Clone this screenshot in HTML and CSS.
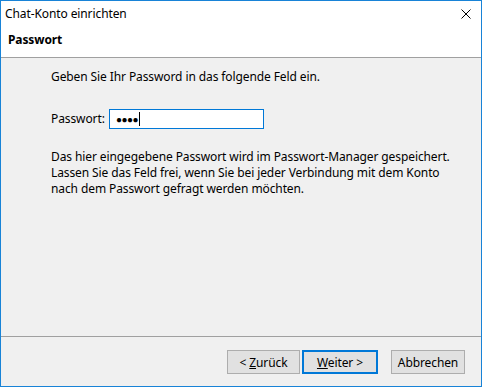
FILE: index.html
```html
<!DOCTYPE html>
<html lang="de">
<head>
    <meta charset="UTF-8">
    <title>Chat-Konto einrichten</title>
    <link rel="stylesheet" href="styles.css">
</head>
<body>
    <div class="window">
        <div class="titlebar">
            <span class="title">Chat-Konto einrichten</span>
            <svg class="close" width="10" height="10" viewBox="0 0 10 10">
                <path d="M0.5 0.5 L9.5 9.5 M9.5 0.5 L0.5 9.5" stroke="#000" stroke-width="1" fill="none"/>
            </svg>
        </div>
        <div class="header">Passwort</div>
        <div class="content">
            <p class="intro">Geben Sie Ihr Password in das folgende Feld ein.</p>
            <div class="field-row">
                <label for="pw">Passwort:</label>
                <div class="input-box" id="pw"><span class="dots">&#9679;&#9679;&#9679;&#9679;</span><span class="caret"></span></div>
            </div>
            <p class="note">Das hier eingegebene Passwort wird im Passwort-Manager gespeichert.<br>
            Lassen Sie das Feld frei, wenn Sie bei jeder Verbindung mit dem Konto<br>
            nach dem Passwort gefragt werden möchten.</p>
        </div>
        <div class="footer">
            <button class="btn btn-back">&lt; <u>Z</u>urück</button>
            <button class="btn btn-next"><u>W</u>eiter &gt;</button>
            <button class="btn btn-cancel">Abbrechen</button>
        </div>
    </div>
</body>
</html>
```

FILE: styles.css
```css
html, body {
    margin: 0;
    padding: 0;
}
body {
    font-family: "Noto Sans", "Open Sans", sans-serif;
    font-size: 12px;
    letter-spacing: -0.1px;
    color: #000;
}
.window {
    width: 482px;
    height: 387px;
    box-sizing: border-box;
    border: 1px solid #1883d7;
    background-color: #f0f0f0;
    display: flex;
    flex-direction: column;
}
.titlebar {
    height: 26px;
    background-color: #fff;
    display: flex;
    align-items: center;
    justify-content: space-between;
    padding: 0 10px 0 4px;
}
.title {
    font-size: 12px;
    line-height: 16px;
}
.header {
    background-color: #fff;
    font-weight: bold;
    line-height: 16px;
    padding: 5px 7px 9px;
    border-bottom: 1px solid #a0a0a0;
}
.content {
    flex: 1;
    padding: 11px 20px 0 50px;
    line-height: 16px;
}
.intro {
    margin: 0;
}
.field-row {
    display: flex;
    align-items: center;
    margin-top: 24px;
}
.field-row label {
    width: 58px;
}
.input-box {
    width: 147px;
    height: 18px;
    border: 1px solid #0078d7;
    background-color: #fff;
    display: flex;
    align-items: center;
    padding-left: 6px;
    box-sizing: content-box;
}
.dots {
    font-size: 10px;
    letter-spacing: -0.5px;
}
.caret {
    width: 1px;
    height: 14px;
    background-color: #000;
    margin-left: 1px;
}
.note {
    margin: 20px 0 0;
}
.footer {
    border-top: 1px solid #a0a0a0;
    height: 50px;
    display: flex;
    align-items: flex-start;
    padding: 13px 15px 0 226px;
    box-sizing: border-box;
}
.btn {
    font-family: inherit;
    font-size: 12px;
    letter-spacing: -0.1px;
    height: 24px;
    background-color: #e1e1e1;
    border: 1px solid #adadad;
    padding: 0;
    color: #000;
}
.btn-back {
    width: 73px;
}
.btn-next {
    width: 76px;
    margin-left: 2px;
    border: 2px solid #0078d7;
}
.btn-cancel {
    width: 74px;
    margin-left: 13px;
}
```
